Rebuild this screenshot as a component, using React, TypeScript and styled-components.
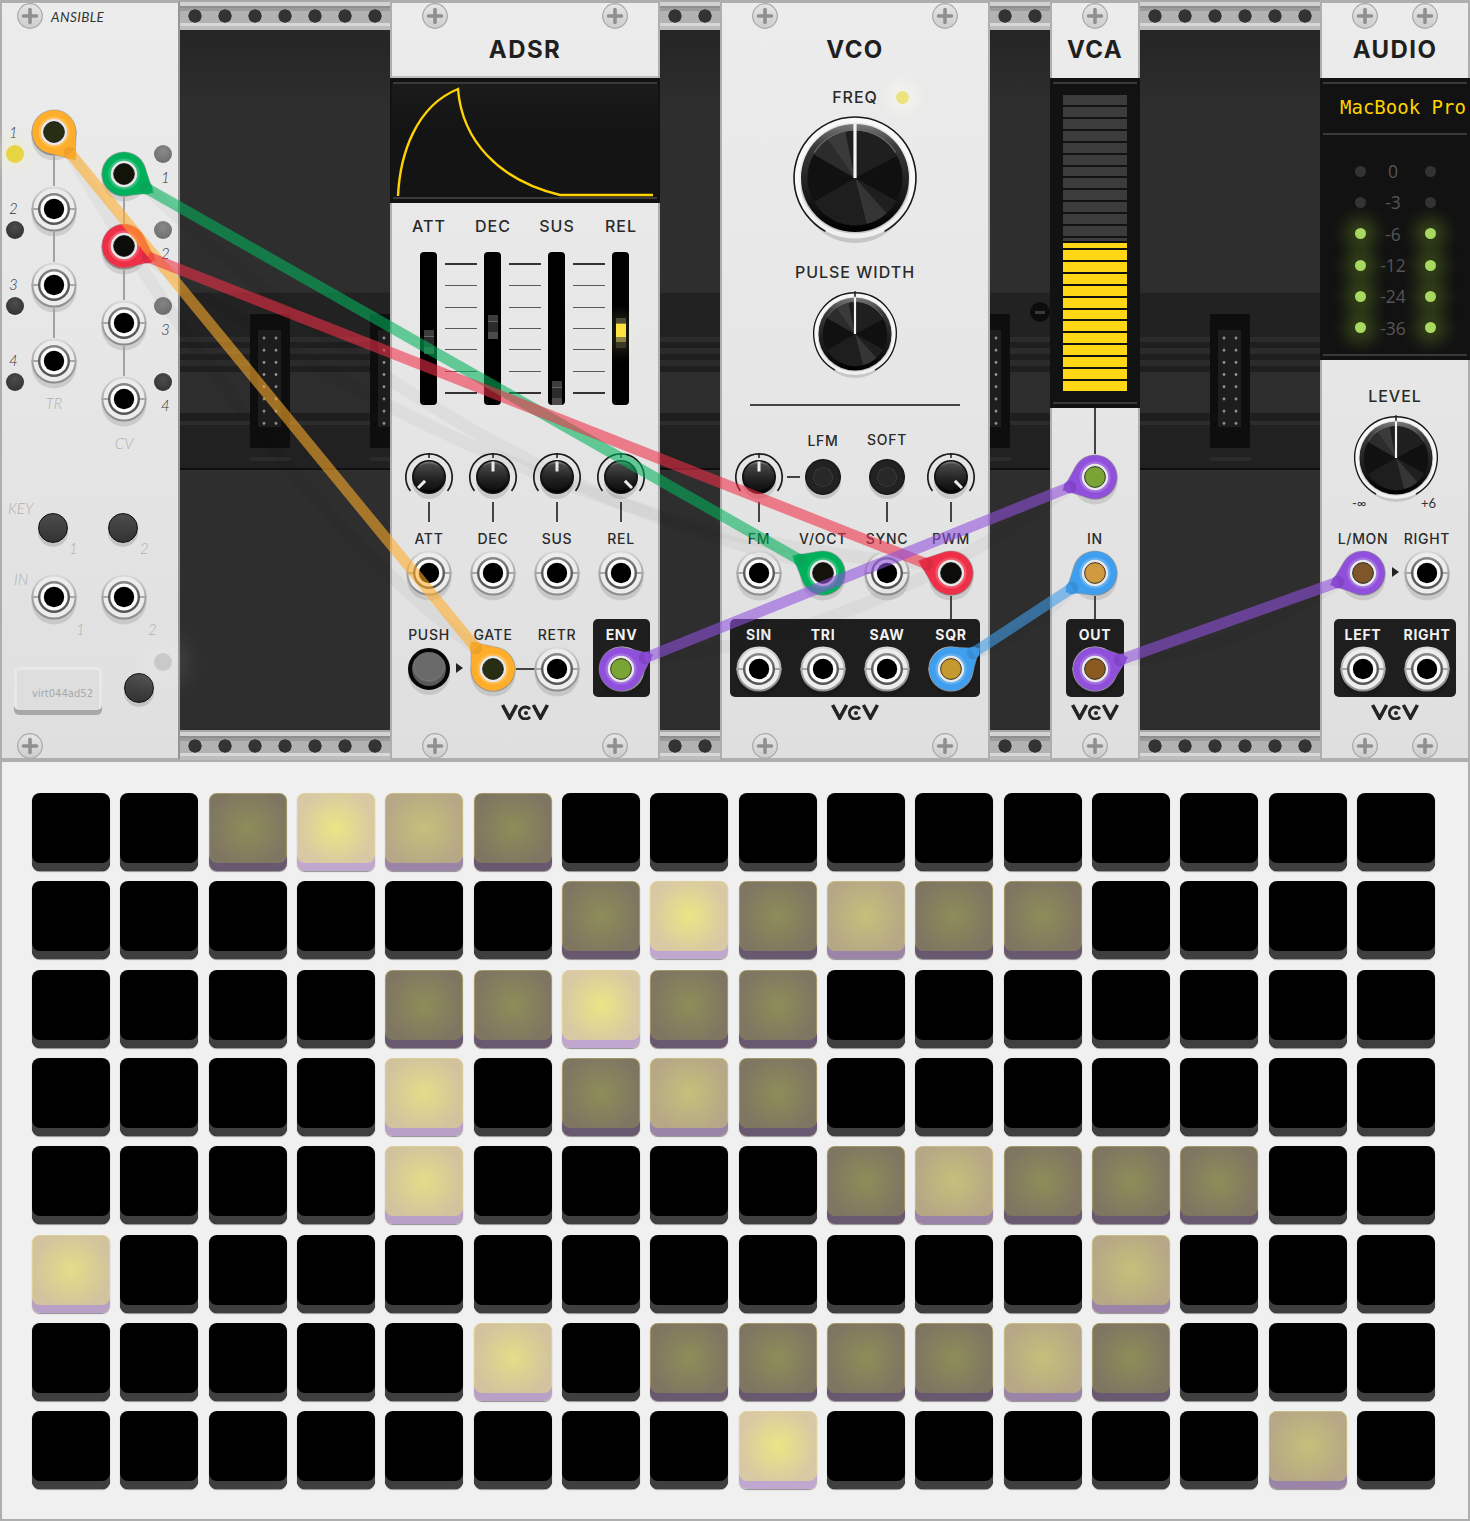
import React from 'react';
import styled, { createGlobalStyle } from 'styled-components';

const GlobalStyle = createGlobalStyle`
  html, body { margin: 0; padding: 0; background: #f0f0f0; }
  * { box-sizing: border-box; }
`;

const Page = styled.div`
  width: 1470px;
  height: 1521px;
  font-family: 'Inter', 'Liberation Sans', sans-serif;
  color: #222;
  overflow: hidden;
`;

/* ---------- rack and backplane ---------- */

const Rack = styled.div`
  display: grid;
  width: 1470px;
  height: 760px;
  & > * { grid-area: 1 / 1; }
`;

const Backplane = styled.div`
  display: flex;
  flex-direction: column;
  height: 760px;
  overflow: hidden;
  background: #2d2d2d;
`;

const Rail = styled.div`
  height: 30px;
  flex: none;
  background:
    radial-gradient(circle 6.8px at 15px 16px, #333 94%, transparent 100%) 0 0 / 30px 30px repeat-x,
    linear-gradient(#a8a8a8 0 2px, #d2d2d2 2px 6px, #8e8e8e 6px 8px, #9c9c9c 8px 11px, #b2b2b2 11px 23px, #d8d8d8 23px 26px, #bdbdbd 26px 30px);
`;

const ChassisUpper = styled.div`
  height: 262px;
  flex: none;
  background: linear-gradient(#252525, #2e2e2e 30%, #2e2e2e);
`;

const ChassisLower = styled.div`
  height: 260px;
  flex: none;
  background: #2e2e2e;
`;

const BusBand = styled.div`
  position: relative;
  display: flex;
  flex: none;
  gap: 80px;
  height: 178px;
  padding: 22px 0 0 250px;
  background: linear-gradient(
    #2a2a2a 0 1px, #222 1px 45px, #2b2b2b 45px 50px, #1f1f1f 50px 56px, #2b2b2b 56px 62px,
    #1f1f1f 62px 68px, #2b2b2b 68px 74px, #1f1f1f 74px 80px, #2d2d2d 80px 93px, #2d2d2d 93px 121px,
    #1e1e1e 121px 129px, #2c2c2c 129px 133px, #212121 133px 176px, #0f0f0f 176px 178px
  );
`;

const BusSocket = styled.div`
  flex: none;
  width: 40px;
  height: 134px;
  padding: 8px 5px 5px;
  background: #0e0e0e;
  position: relative;
  &::after {
    content: '';
    position: absolute;
    left: -1px;
    right: -1px;
    top: 143px;
    height: 4px;
    border-radius: 2px;
    background: #2b2b2b;
  }
`;

const BusPins = styled.div`
  height: 121px;
  background:
    radial-gradient(circle 1.6px at 9px 8px, #8a8a8a 90%, transparent) 0 0 / 12px 12.2px,
    #1d1d1d;
  background-repeat: repeat;
  background-position: 0 8px;
  background-size: 12px 12.2px;
  background-clip: content-box;
  padding: 8px 4px 16px 3px;
`;

const BusScrew = styled.div`
  position: absolute;
  left: 1030px;
  top: 10px;
  width: 20px;
  height: 20px;
  border-radius: 50%;
  background: #0c0c0c;
  &::after {
    content: '';
    display: block;
    width: 10px;
    height: 3px;
    margin: 8.5px 0 0 5px;
    background: #3a3a3a;
  }
`;

const ModuleRow = styled.div`
  position: relative;
  display: flex;
  width: 1470px;
  height: 760px;
`;

const Gap = styled.div<{ $w: number }>`
  flex: none;
  width: ${(p) => p.$w}px;
`;

/* ---------- panels ---------- */

const Panel = styled.div<{ $w: number }>`
  flex: none;
  display: flex;
  flex-direction: column;
  width: ${(p) => p.$w}px;
  height: 760px;
  border-style: solid;
  border-width: 3px 2px 2px;
  border-color: #aeaeae;
  background: linear-gradient(#ececec, #e6e6e6 50%, #dfdfdf);
`;

const PanelHeader = styled.div<{ $ruled?: boolean }>`
  height: 75px;
  flex: none;
  border-bottom: 2px solid ${(p) => (p.$ruled ? '#bdbdbd' : 'transparent')};
`;

const ScrewRow = styled.div<{ $single?: boolean }>`
  display: flex;
  justify-content: ${(p) => (p.$single ? 'center' : 'space-between')};
  height: 26px;
  padding: 0 ${(p) => (p.$single ? 0 : 30)}px;
`;

const Title = styled.div`
  height: 40px;
  line-height: 42px;
  text-align: center;
  font-size: 24px;
  font-weight: 700;
  letter-spacing: 1.4px;
  color: #1f1f1f;
`;

const BottomScrews = styled.div`
  margin-top: 13px;
`;

const Row4 = styled.div<{ $mt?: number; $h?: number }>`
  display: grid;
  grid-template-columns: repeat(4, 64px);
  justify-content: center;
  justify-items: center;
  align-items: center;
  flex: none;
  margin-top: ${(p) => p.$mt ?? 0}px;
  height: ${(p) => (p.$h ? `${p.$h}px` : 'auto')};
`;

const Row2 = styled(Row4)`
  grid-template-columns: repeat(2, 64px);
`;

const Label = styled.div<{ $up?: number }>`
  font-size: 14px;
  line-height: 18px;
  height: 16px;
  font-weight: 500;
  letter-spacing: 0.7px;
  color: #2a2a2a;
  white-space: nowrap;
  margin-top: ${(p) => -(p.$up ?? 0)}px;
`;

const BigLabel = styled(Label)`
  font-size: 16px;
  line-height: 16px;
  letter-spacing: 1px;
`;

const StackLabel = styled(BigLabel)<{ $mt: number }>`
  flex: none;
  text-align: center;
  margin-top: ${(p) => p.$mt}px;
`;

const OutCell = styled.div<{ $dark?: boolean }>`
  position: relative;
  display: flex;
  flex-direction: column;
  align-items: center;
  gap: 4px;
  height: 78px;
  padding-top: 7px;
  ${(p) => p.$dark && 'width: 57px; margin-left: 1px; background: #1e1e1e; border-radius: 5px;'}
  ${Label} { ${(p) => p.$dark && 'color: #f2f2f2; font-weight: 700;'} }
`;

const OutputBox = styled(Row4)<{ $w: number }>`
  width: ${(p) => p.$w}px;
  height: 78px;
  margin: 0 auto;
  border-radius: 5px;
  background: #1e1e1e;
  ${OutCell} { ${Label} { color: #f2f2f2; font-weight: 700; } }
`;

const SingleDark = styled.div`
  width: 58px;
  margin: 0 auto;
`;

const JackLink = styled.div`
  position: absolute;
  left: calc(50% + 23px);
  top: 49px;
  width: 19px;
  height: 2px;
  background: #444;
`;

const Arrow = styled.div<{ $left: number; $top: number }>`
  position: absolute;
  left: calc(50% + ${(p) => p.$left}px);
  top: ${(p) => p.$top}px;
  border-style: solid;
  border-width: 5.5px 0 5.5px 7px;
  border-color: transparent transparent transparent #222;
`;

const Tick = styled.div<{ $h?: number }>`
  width: 2px;
  height: ${(p) => p.$h ?? 20}px;
  background: #444;
`;

const KnobSlot = styled.div<{ $h: number }>`
  position: relative;
  display: flex;
  justify-content: center;
  align-items: center;
  flex: none;
  height: ${(p) => p.$h}px;
  width: 52px;
  & > svg { flex: none; display: block; overflow: visible; }
`;

const CenteredSlot = styled(KnobSlot)<{ $mt: number }>`
  width: 100%;
  margin-top: ${(p) => p.$mt}px;
`;

const KnobDash = styled.div`
  position: absolute;
  left: calc(50% + 28px);
  top: 24px;
  width: 13px;
  height: 2px;
  background: #444;
`;

const RoundButton = styled.div<{ $size: number }>`
  width: ${(p) => p.$size}px;
  height: ${(p) => p.$size}px;
  flex: none;
  border-radius: 50%;
  border: 1.5px solid #0b0b0b;
  background: linear-gradient(#4c4c4c, #333);
  box-shadow: 0 4px 0 rgba(0, 0, 0, 0.13);
`;

const SwitchButton = styled(RoundButton)`
  border-color: #111;
  background: radial-gradient(circle, #282828 0 9px, #343434 9px 10px, #222 10px 15px, #181818 18px);
`;

const PushButton = styled(RoundButton)`
  border: 4px solid #070707;
  background: radial-gradient(circle at 50% 40%, #6a6a6a 0 14px, #747474 15px, #585858 17px);
  box-shadow: 0 5px 0 rgba(0, 0, 0, 0.11);
`;

const LogoRow = styled.div`
  display: flex;
  justify-content: center;
  height: 16px;
  margin-top: 7px;
  flex: none;
`;

/* ---------- ansible ---------- */

const AnsibleTop = styled.div`
  display: flex;
  align-items: center;
  height: 26px;
  padding-left: 15px;
  gap: 8px;
`;

const AnsibleName = styled.div`
  font-family: 'Lato', sans-serif;
  font-style: italic;
  font-size: 13.5px;
  font-weight: 400;
  letter-spacing: 0.4px;
  color: #333;
  padding-top: 2px;
`;

const JackBank = styled.div`
  display: grid;
  grid-template-columns: 29px 46px 24px 46px 30px;
  height: 380px;
  margin-top: 81px;
  flex: none;
`;

const JackColumn = styled.div<{ $pt?: number }>`
  display: flex;
  flex-direction: column;
  align-items: center;
  padding-top: ${(p) => p.$pt ?? 0}px;
`;

const Wire = styled.div<{ $h: number }>`
  width: 1.5px;
  height: ${(p) => p.$h}px;
  background: #a2a2a2;
  flex: none;
`;

const TagColumn = styled.div<{ $pt: number }>`
  padding-top: ${(p) => p.$pt}px;
`;

const LeftTag = styled.div`
  display: flex;
  flex-direction: column;
  height: 76px;
  gap: 6px;
  padding-left: 4px;
`;

const RightTag = styled.div`
  display: flex;
  flex-direction: column;
  height: 76px;
  gap: 7px;
  padding-left: 7px;
`;

const ItalicNumber = styled.div<{ $pale?: boolean; $ml?: number; $mt?: number }>`
  font-family: 'Lato', sans-serif;
  font-style: italic;
  font-weight: 300;
  font-size: 15px;
  line-height: 14px;
  height: 14px;
  color: ${(p) => (p.$pale ? '#b0b0b0' : '#333')};
  margin-left: ${(p) => p.$ml ?? 0}px;
  margin-top: ${(p) => p.$mt ?? 0}px;
  white-space: nowrap;
`;

const BankCaption = styled(ItalicNumber)`
  margin-left: 0;
  text-align: center;
`;

const Led = styled.div<{ $tone: 'lit' | 'dark' | 'grey' | 'pale' }>`
  width: 18px;
  height: 18px;
  flex: none;
  border-radius: 50%;
  ${(p) =>
    ({
      lit: 'background: #e6d443; box-shadow: 0 0 14px 6px rgba(240,240,200,.45);',
      dark: 'background: radial-gradient(circle at 50% 35%, #4d4d4d, #2c2c2c);',
      grey: 'background: radial-gradient(circle at 50% 35%, #8a8a8a, #666);',
      pale: 'background: #c9c9c9; box-shadow: 0 0 26px 14px rgba(255,255,255,.12);',
    })[p.$tone]}
`;

const FreqLed = styled.div`
  width: 13px;
  height: 13px;
  margin-left: 18px;
  border-radius: 50%;
  background: #ece27e;
  box-shadow: 0 0 12px 10px rgba(255, 255, 240, 0.35);
`;

const KeyGrid = styled.div<{ $h: number }>`
  display: grid;
  grid-template-columns: 29px 46px 24px 46px;
  height: ${(p) => p.$h}px;
  flex: none;
`;

const KeyCell = styled.div<{ $mt?: number; $ml?: number }>`
  padding-top: ${(p) => p.$mt ?? 0}px;
  padding-left: ${(p) => p.$ml ?? 0}px;
`;

const PlateRow = styled.div`
  display: flex;
  height: 95px;
  flex: none;
`;

const DevicePlate = styled.div`
  width: 88px;
  height: 48px;
  margin: 29px 0 0 12px;
  padding: 21px 9px 0 0;
  border-radius: 5px;
  background: #dedede;
  box-shadow: inset 0 -5px 0 #a8a8a8, inset 0 0 0 3px #e8e8e8;
  font-family: 'DejaVu Sans', sans-serif;
  font-size: 10px;
  line-height: 12px;
  color: #a8a8a8;
  text-align: right;
  flex: none;
`;

const PlateButton = styled(RoundButton)`
  margin: 35px 0 0 22px;
`;

const PlateLed = styled(Led)`
  margin-top: 15px;
  margin-left: 0;
`;

/* ---------- displays ---------- */

const Display = styled.div<{ $h: number }>`
  height: ${(p) => p.$h}px;
  flex: none;
  margin: 0 -2px;
  padding: 4px 2px;
  background: #121212;
  overflow: hidden;
`;

const DisplayRule = styled.div`
  height: 2px;
  background: #3a3a3a;
  margin: 0 1px;
`;

const EnvelopeArea = styled.div`
  height: 113px;
  background: linear-gradient(#1b1b1b, #141414 40%);
  & > svg { display: block; }
`;

const MeterStack = styled.div`
  display: grid;
  grid-template-rows: repeat(25, 1fr);
  row-gap: 2px;
  width: 64px;
  height: 296px;
  margin: 11px auto;
`;

const MeterBar = styled.div<{ $tone: 'off' | 'on' | 'edge' }>`
  background: ${(p) =>
    p.$tone === 'off'
      ? '#3c3c3c'
      : p.$tone === 'on'
        ? '#ffd714'
        : 'linear-gradient(#3c3c3c 0 3px, #0e0e0e 3px 5px, #ffd714 5px)'};
`;

const DeviceName = styled.div`
  height: 49px;
  padding-left: 18px;
  font-family: 'DejaVu Sans Mono', monospace;
  font-size: 19px;
  line-height: 46px;
  color: #ffd200;
  white-space: pre;
  overflow: hidden;
`;

const VuGrid = styled.div`
  display: grid;
  grid-template-columns: repeat(3, 35px);
  grid-auto-rows: 31.3px;
  justify-content: center;
  align-items: center;
  justify-items: center;
  padding-top: 20.5px;
  height: 219px;
`;

const VuLed = styled.div<{ $on?: boolean }>`
  width: 11px;
  height: 11px;
  border-radius: 50%;
  background: ${(p) => (p.$on ? '#a9d960' : '#333')};
  box-shadow: ${(p) => (p.$on ? '0 0 16px 10px rgba(110,150,40,.38)' : 'none')};
`;

const VuText = styled.div`
  font-family: 'Open Sans', sans-serif;
  font-size: 17.5px;
  color: #555;
  line-height: 20px;
  white-space: nowrap;
  margin-right: 4px;
`;

const GainScale = styled.div`
  display: flex;
  justify-content: space-between;
  margin-top: -6px;
  padding: 1px 32px 0 30px;
  height: 16px;
  font-family: 'Lato', sans-serif;
  font-size: 13px;
  line-height: 16px;
  color: #333;
  flex: none;
`;

/* ---------- faders ---------- */

const FaderBank = styled.div`
  display: flex;
  height: 153px;
  margin: 14px 0 0 28px;
  flex: none;
`;

const FaderTrack = styled.div`
  position: relative;
  width: 17px;
  flex: none;
  border-radius: 4px;
  background: #000;
`;

const FaderHandle = styled.div<{ $lit?: boolean }>`
  position: absolute;
  left: 3.5px;
  width: 10px;
  height: ${(p) => (p.$lit ? 30 : 24)}px;
  background: ${(p) =>
    p.$lit
      ? 'linear-gradient(#4e4a38 0 5px, #8a8240 5px 6px, #ffe23f 6px 19px, #8a8240 19px 24px, #3a3722 24px 30px)'
      : 'linear-gradient(#3c3c3c 0 6px, #666 6px 7px, #2b2b2b 7px 17px, #4b4b4b 17px 24px)'};
  ${(p) => p.$lit && 'box-shadow: 0 0 12px 5px rgba(255,255,200,.12);'}
`;

const TickColumn = styled.div`
  display: flex;
  flex-direction: column;
  justify-content: space-between;
  width: 32px;
  margin: 0 7px 0 8px;
  padding: 11px 0;
  flex: none;
`;

const FaderTick = styled.div<{ $strong?: boolean }>`
  height: ${(p) => (p.$strong ? 2 : 1)}px;
  background: ${(p) => (p.$strong ? '#333' : '#5a5a5a')};
`;

const Rule = styled.div`
  width: 210px;
  height: 2px;
  margin: 28px auto 0;
  background: #444;
  flex: none;
`;

const FreqRow = styled.div`
  display: grid;
  grid-template-columns: 1fr auto 1fr;
  align-items: center;
  height: 16px;
  margin-top: 11px;
  flex: none;
`;

const CableLayer = styled.svg`
  position: relative;
  z-index: 2;
  display: block;
  pointer-events: none;
`;

const SharedDefsSvg = styled.svg`
  position: absolute;
  width: 0;
  height: 0;
`;

/* ---------- pad matrix ---------- */

const PadPanel = styled.div`
  display: grid;
  grid-template-columns: repeat(16, 78px);
  grid-auto-rows: 78px;
  gap: 10.33px;
  height: 761px;
  padding: 31px 0 0 30px;
  border: 2px solid #aeaeae;
  background: #f0f0f0;
`;

const padTones: Record<string, { mid: string; edge: string; lip: string }> = {
  a: { mid: '#8e8d58', edge: '#7f7662', lip: '#685870' },
  b: { mid: '#c6bf7a', edge: '#b6a886', lip: '#9a85a8' },
  c: { mid: '#e4dd88', edge: '#d2c39e', lip: '#b8a0c6' },
  d: { mid: '#ece585', edge: '#d8c8a4', lip: '#bfa7cf' },
};

const Pad = styled.div<{ $level: string }>`
  border-radius: 8px;
  ${(p) => {
    const tone = padTones[p.$level];
    return tone
      ? `background: radial-gradient(circle at 50% 45%, ${tone.mid}, ${tone.edge} 68%);
         box-shadow: inset 0 -8px 0 ${tone.lip}, 0 1px 1px rgba(0,0,0,.4), inset 0 0 0 .5px rgba(240,230,130,.6);`
      : `background: #000;
         box-shadow: inset 0 -8px 0 #3f3f3f, 0 1px 1px rgba(0,0,0,.4);`;
  }}
`;

const padRows = [
  '..adba..........',
  '......adabaa....',
  '....aadaa.......',
  '....c.aba.......',
  '....c....abaaa..',
  'c...........b...',
  '.....c.aaaaba...',
  '........d.....b.',
];

/* ---------- drawn parts ---------- */

function SharedDefs() {
  return (
    <SharedDefsSvg aria-hidden="true">
      <defs>
        <linearGradient id="jackRim" x1="0" y1="0" x2="0" y2="1">
          <stop offset="0" stopColor="#dcdcdc" />
          <stop offset="0.5" stopColor="#a6a6a6" />
          <stop offset="1" stopColor="#8a8a8a" />
        </linearGradient>
        <linearGradient id="jackCollar" x1="0" y1="0" x2="0" y2="1">
          <stop offset="0" stopColor="#8a8a8a" />
          <stop offset="0.5" stopColor="#5c5c5c" />
          <stop offset="1" stopColor="#555" />
        </linearGradient>
        <linearGradient id="screwFace" x1="0" y1="0" x2="0" y2="1">
          <stop offset="0" stopColor="#e6e6e6" />
          <stop offset="1" stopColor="#cdcdcd" />
        </linearGradient>
        <linearGradient id="knobRim" x1="0" y1="0" x2="0" y2="1">
          <stop offset="0" stopColor="#7a7a7a" />
          <stop offset="0.2" stopColor="#3a3a3a" />
          <stop offset="1" stopColor="#000" />
        </linearGradient>
        <linearGradient id="knobFace" x1="0" y1="0" x2="0" y2="1">
          <stop offset="0" stopColor="#4a4a4a" />
          <stop offset="0.6" stopColor="#222" />
          <stop offset="1" stopColor="#0e0e0e" />
        </linearGradient>
      </defs>
    </SharedDefsSvg>
  );
}

function Screw() {
  return (
    <svg width="26" height="26" viewBox="0 0 26 26">
      <circle cx="13" cy="13" r="12.3" fill="url(#screwFace)" stroke="#a9a9a9" strokeWidth="1.2" />
      <path d="M13 6.5v13M6.5 13h13" stroke="#8f8f8f" strokeWidth="3.6" strokeLinecap="round" />
    </svg>
  );
}

function Jack() {
  return (
    <svg width="46" height="46" viewBox="-23 -23 46 46" style={{ display: 'block', overflow: 'visible', flex: 'none' }}>
      <circle cy="5" r="22.5" fill="rgba(0,0,0,.11)" />
      <circle r="22.6" fill="url(#jackRim)" />
      <circle r="20.6" fill="#ececec" />
      <path d="M-22.5 0h7M15.5 0h7" stroke="#a8a8a8" strokeWidth="1.8" />
      <circle r="16" fill="url(#jackCollar)" />
      <circle r="13.6" fill="#fcfcfc" />
      <circle r="10.2" fill="#000" />
    </svg>
  );
}

function Logo() {
  return (
    <svg width="48" height="16" viewBox="0 0 48 16">
      <path d="M1.6 1 8.6 14 15.6 1M32.4 1l7 13 7-13" fill="none" stroke="#242424" strokeWidth="3.6" />
      <path d="M29 5.2A6 6 0 1 0 29 12.8" fill="none" stroke="#242424" strokeWidth="2.8" />
      <circle cx="25" cy="9" r="2" fill="#242424" />
    </svg>
  );
}

const polar = (r: number, deg: number) => {
  const a = ((deg - 90) * Math.PI) / 180;
  return [r * Math.cos(a), r * Math.sin(a)];
};

const arcPath = (r: number, from: number, to: number) => {
  const [x1, y1] = polar(r, from);
  const [x2, y2] = polar(r, to);
  const large = to - from > 180 ? 1 : 0;
  return `M${x1} ${y1}A${r} ${r} 0 ${large} 1 ${x2} ${y2}`;
};

const wedgePath = (r: number, from: number, to: number) => {
  const [x1, y1] = polar(r, from);
  const [x2, y2] = polar(r, to);
  return `M0 0L${x1} ${y1}A${r} ${r} 0 0 1 ${x2} ${y2}Z`;
};

function SmallKnob({ angle }: { angle: number }) {
  return (
    <svg width="52" height="52" viewBox="-26 -26 52 52">
      <circle cy="5" r="17" fill="#c9c9c9" />
      <path d={arcPath(23.2, -127, 127)} fill="none" stroke="#1c1c1c" strokeWidth="1.7" />
      <path d="M0-24v5" stroke="#1c1c1c" strokeWidth="1.5" />
      <circle r="17" fill="#0f0f0f" />
      <circle r="15.4" fill="url(#knobRim)" />
      <circle r="13.6" fill="url(#knobFace)" />
      <rect x="-1.5" y="-15.5" width="3" height="10" fill="#ececec" transform={`rotate(${angle})`} />
    </svg>
  );
}

const facets: [number, number, string][] = [
  [0, 62, '#1f1f1f'],
  [62, 119, '#101010'],
  [119, 138, '#1f1f1f'],
  [138, 166, '#353535'],
  [166, 240, '#1e1e1e'],
  [240, 300, '#111'],
  [300, 325, '#2c2c2c'],
  [325, 348, '#3a3a3a'],
  [348, 360, '#1e1e1e'],
];

function FacetKnob({ size, tick }: { size: number; tick?: boolean }) {
  return (
    <svg width={size} height={size} viewBox="-65 -65 130 130">
      <circle cy="11" r="54" fill="#c6c6c6" />
      <circle r="58" fill="none" stroke="#fdfdfd" strokeWidth="5" opacity="0.75" />
      <path d={arcPath(61, -151, 151)} fill="none" stroke="#181818" strokeWidth={tick ? 2 : 1.6} />
      {tick && <path d="M0-63v8" stroke="#222" strokeWidth="2.4" />}
      <circle r="54" fill="url(#knobRim)" />
      {facets.map(([from, to, fill]) => (
        <path key={from} d={wedgePath(47.5, from, to)} fill={fill} />
      ))}
      <path d={arcPath(48, -58, 58)} fill="none" stroke="#6b6b6b" strokeWidth="1.2" />
      <rect x="-1.6" y="-54" width="3.2" height="54" fill="#f4f4f4" />
    </svg>
  );
}

function EnvelopeGraph() {
  return (
    <svg width="266" height="113" viewBox="0 0 266 113">
      <path
        d="M6 112C8 70 24 22 66 5 70 56 106 96 168 111L261 111"
        fill="none"
        stroke="#ffd200"
        strokeWidth="2.4"
        strokeLinejoin="miter"
      />
    </svg>
  );
}

/* ---------- cables ---------- */

type PlugEnd = { x: number; y: number; dx: number; dy: number; hole: string };
type Cable = { color: string; dot: string; a: PlugEnd; b: PlugEnd };

const cables: Cable[] = [
  {
    color: '#ffae2b',
    dot: '#eda12a',
    a: { x: 54, y: 132, dx: 70, dy: 153, hole: '#272e14' },
    b: { x: 493, y: 669, dx: 476, dy: 648, hole: '#272e14' },
  },
  {
    color: '#00b15c',
    dot: '#0ba55a',
    a: { x: 124, y: 174, dx: 146, dy: 188, hole: '#13130a' },
    b: { x: 823, y: 573, dx: 800, dy: 560, hole: '#13130a' },
  },
  {
    color: '#ef2f47',
    dot: '#d92c42',
    a: { x: 124, y: 246, dx: 148, dy: 257, hole: '#0c0c08' },
    b: { x: 951, y: 573, dx: 927, dy: 564, hole: '#0c0c08' },
  },
  {
    color: '#9150dc',
    dot: '#8243c9',
    a: { x: 621, y: 669, dx: 645, dy: 658, hole: '#7aa535' },
    b: { x: 1095, y: 477, dx: 1070, dy: 487, hole: '#7aa535' },
  },
  {
    color: '#3f9fee',
    dot: '#3a90d8',
    a: { x: 951, y: 669, dx: 973, dy: 653, hole: '#c49a30' },
    b: { x: 1095, y: 573, dx: 1072, dy: 588, hole: '#d09a40' },
  },
  {
    color: '#9150dc',
    dot: '#8243c9',
    a: { x: 1095, y: 669, dx: 1120, dy: 660, hole: '#8a5a20' },
    b: { x: 1363, y: 573, dx: 1338, dy: 582, hole: '#7e5629' },
  },
];

function Plug({ end, color, dot }: { end: PlugEnd; color: string; dot: string }) {
  const angle = (Math.atan2(end.dy - end.y, end.dx - end.x) * 180) / Math.PI;
  const R = 22;
  const tip = 35;
  const t = Math.acos(R / tip);
  const tx = R * Math.cos(t);
  const ty = R * Math.sin(t);
  const dist = Math.hypot(end.dx - end.x, end.dy - end.y);
  return (
    <g transform={`translate(${end.x} ${end.y})`}>
      <g transform={`rotate(${angle})`}>
        <path
          d={`M${tx} ${-ty}A${R} ${R} 0 1 0 ${tx} ${ty}L${tip} 0Z`}
          fill={color}
          stroke="#8b8b8b"
          strokeOpacity="0.45"
          strokeWidth="1"
          strokeLinejoin="round"
        />
        <circle cx={dist} r="6.3" fill={dot} />
      </g>
      <circle r="15.6" fill="#fff" fillOpacity="0.18" />
      <circle r="13.2" fill="#e8e8e8" />
      <circle r="10.4" fill={end.hole} stroke="#111" strokeWidth="0.8" />
    </g>
  );
}

function Cables() {
  return (
    <CableLayer width="1470" height="760" viewBox="0 0 1470 760">
      {cables.map((c) => {
        const len = Math.hypot(c.b.dx - c.a.dx, c.b.dy - c.a.dy);
        const mx = (c.a.dx + c.b.dx) / 2;
        const my = (c.a.dy + c.b.dy) / 2 + len * 0.15;
        return (
          <path
            key={`s${c.a.x}${c.a.y}`}
            d={`M${c.a.dx} ${c.a.dy}Q${mx} ${my} ${c.b.dx} ${c.b.dy}`}
            fill="none"
            stroke="rgba(0,0,0,.032)"
            strokeWidth="13"
          />
        );
      })}
      {cables.map((c) => (
        <g key={`p${c.a.x}${c.a.y}`}>
          <Plug end={c.a} color={c.color} dot={c.dot} />
          <Plug end={c.b} color={c.color} dot={c.dot} />
        </g>
      ))}
      {cables.map((c) => (
        <line
          key={`c${c.a.x}${c.a.y}`}
          x1={c.a.dx}
          y1={c.a.dy}
          x2={c.b.dx}
          y2={c.b.dy}
          stroke={c.color}
          strokeOpacity="0.58"
          strokeWidth="11"
        />
      ))}
    </CableLayer>
  );
}

/* ---------- modules ---------- */

function Ansible() {
  return (
    <Panel $w={180} style={{ borderRightColor: '#959595' }}>
      <AnsibleTop>
        <Screw />
        <AnsibleName>ANSIBLE</AnsibleName>
      </AnsibleTop>
      <JackBank>
        <TagColumn $pt={15}>
          {['1', '2', '3', '4'].map((n, i) => (
            <LeftTag key={n}>
              <ItalicNumber $ml={3}>{n}</ItalicNumber>
              <Led $tone={i === 0 ? 'lit' : 'dark'} />
            </LeftTag>
          ))}
        </TagColumn>
        <JackColumn>
          <Jack />
          <Wire $h={30} />
          <Jack />
          <Wire $h={30} />
          <Jack />
          <Wire $h={30} />
          <Jack />
          <BankCaption $pale $mt={12}>TR</BankCaption>
        </JackColumn>
        <div />
        <JackColumn $pt={41}>
          <Jack />
          <Wire $h={27} />
          <Jack />
          <Wire $h={30} />
          <Jack />
          <Wire $h={30} />
          <Jack />
          <BankCaption $pale $mt={14}>CV</BankCaption>
        </JackColumn>
        <TagColumn $pt={35}>
          {['1', '2', '3', '4'].map((n, i) => (
            <RightTag key={n}>
              <Led $tone={i === 3 ? 'dark' : 'grey'} />
              <ItalicNumber $ml={7}>{n}</ItalicNumber>
            </RightTag>
          ))}
        </TagColumn>
      </JackBank>
      <KeyGrid $h={70}>
        <KeyCell $mt={11} $ml={6}><ItalicNumber $pale>KEY</ItalicNumber></KeyCell>
        <KeyCell $mt={23} $ml={7}>
          <RoundButton $size={30} />
          <ItalicNumber $pale $ml={31} $mt={-2}>1</ItalicNumber>
        </KeyCell>
        <div />
        <KeyCell $mt={23} $ml={7}>
          <RoundButton $size={30} />
          <ItalicNumber $pale $ml={32} $mt={-2}>2</ItalicNumber>
        </KeyCell>
      </KeyGrid>
      <KeyGrid $h={78}>
        <KeyCell $mt={12} $ml={12}><ItalicNumber $pale>IN</ItalicNumber></KeyCell>
        <KeyCell $mt={14}>
          <Jack />
          <ItalicNumber $pale $ml={45} $mt={2}>1</ItalicNumber>
        </KeyCell>
        <div />
        <KeyCell $mt={14}>
          <Jack />
          <ItalicNumber $pale $ml={47} $mt={2}>2</ItalicNumber>
        </KeyCell>
      </KeyGrid>
      <PlateRow>
        <DevicePlate>virt044ad52</DevicePlate>
        <PlateButton $size={30} />
        <PlateLed $tone="pale" />
      </PlateRow>
      <AnsibleTop>
        <Screw />
      </AnsibleTop>
    </Panel>
  );
}

const sliderHandles = [{ top: 78 }, { top: 63 }, { top: 129 }, { top: 66, lit: true }];
const adsrNames = ['ATT', 'DEC', 'SUS', 'REL'];

function Adsr() {
  return (
    <Panel $w={270}>
      <PanelHeader $ruled>
        <ScrewRow><Screw /><Screw /></ScrewRow>
        <Title>ADSR</Title>
      </PanelHeader>
      <Display $h={125}>
        <DisplayRule />
        <EnvelopeArea><EnvelopeGraph /></EnvelopeArea>
        <DisplayRule />
      </Display>
      <Row4 $mt={11} $h={24}>
        {adsrNames.map((n) => <BigLabel key={n}>{n}</BigLabel>)}
      </Row4>
      <FaderBank>
        {sliderHandles.map((h, i) => (
          <React.Fragment key={adsrNames[i]}>
            <FaderTrack>
              <FaderHandle $lit={h.lit} style={{ top: h.top }} />
            </FaderTrack>
            {i < 3 && (
              <TickColumn>
                {[0, 1, 2, 3, 4, 5, 6].map((t) => <FaderTick key={t} $strong={t === 0 || t === 6} />)}
              </TickColumn>
            )}
          </React.Fragment>
        ))}
      </FaderBank>
      <Row4 $mt={47} $h={50}>
        {[-135, 0, 0, 135].map((a, i) => (
          <KnobSlot key={adsrNames[i]} $h={50}><SmallKnob angle={a} /></KnobSlot>
        ))}
      </Row4>
      <Row4 $h={20}>
        {adsrNames.map((n) => <Tick key={n} />)}
      </Row4>
      <Row4 $mt={8} $h={16}>
        {adsrNames.map((n) => <Label key={n}>{n}</Label>)}
      </Row4>
      <Row4 $mt={4} $h={46}>
        {adsrNames.map((n) => <Jack key={n} />)}
      </Row4>
      <Row4 $mt={23} $h={78}>
        <OutCell>
          <Label>PUSH</Label>
          <PushButton $size={42} style={{ marginTop: 2 }} />
        </OutCell>
        <OutCell>
          <Label>GATE</Label>
          <Jack />
          <Arrow $left={-37} $top={44} />
          <JackLink />
        </OutCell>
        <OutCell>
          <Label>RETR</Label>
          <Jack />
        </OutCell>
        <OutCell $dark>
          <Label>ENV</Label>
          <Jack />
        </OutCell>
      </Row4>
      <LogoRow><Logo /></LogoRow>
      <BottomScrews><ScrewRow><Screw /><Screw /></ScrewRow></BottomScrews>
    </Panel>
  );
}

function Vco() {
  return (
    <Panel $w={270}>
      <PanelHeader>
        <ScrewRow><Screw /><Screw /></ScrewRow>
        <Title>VCO</Title>
      </PanelHeader>
      <FreqRow>
        <div />
        <BigLabel>FREQ</BigLabel>
        <FreqLed />
      </FreqRow>
      <CenteredSlot $h={122} $mt={12}><FacetKnob size={130} /></CenteredSlot>
      <StackLabel $mt={25}>PULSE WIDTH</StackLabel>
      <CenteredSlot $h={84} $mt={12}><FacetKnob size={88} tick /></CenteredSlot>
      <Rule />
      <Row4 $mt={26} $h={16}>
        <div />
        <Label>LFM</Label>
        <Label $up={3}>SOFT</Label>
        <div />
      </Row4>
      <Row4 $mt={4} $h={50}>
        <KnobSlot $h={50}>
          <SmallKnob angle={0} />
          <KnobDash />
        </KnobSlot>
        <KnobSlot $h={50}><SwitchButton $size={36} /></KnobSlot>
        <KnobSlot $h={50}><SwitchButton $size={36} /></KnobSlot>
        <KnobSlot $h={50}><SmallKnob angle={135} /></KnobSlot>
      </Row4>
      <Row4 $h={20}>
        <Tick />
        <div />
        <Tick />
        <Tick />
      </Row4>
      <Row4 $mt={8} $h={16}>
        {['FM', 'V/OCT', 'SYNC', 'PWM'].map((n) => <Label key={n}>{n}</Label>)}
      </Row4>
      <Row4 $mt={4} $h={46}>
        {[0, 1, 2, 3].map((n) => <Jack key={n} />)}
      </Row4>
      <Row4 $h={23}>
        <div />
        <div />
        <div />
        <Tick $h={23} />
      </Row4>
      <OutputBox $w={250}>
        {['SIN', 'TRI', 'SAW', 'SQR'].map((n) => (
          <OutCell key={n}>
            <Label>{n}</Label>
            <Jack />
          </OutCell>
        ))}
      </OutputBox>
      <LogoRow><Logo /></LogoRow>
      <BottomScrews><ScrewRow><Screw /><Screw /></ScrewRow></BottomScrews>
    </Panel>
  );
}

function Vca() {
  return (
    <Panel $w={90}>
      <PanelHeader>
        <ScrewRow $single><Screw /></ScrewRow>
        <Title>VCA</Title>
      </PanelHeader>
      <Display $h={330}>
        <DisplayRule />
        <MeterStack>
          {Array.from({ length: 25 }, (_, i) => (
            <MeterBar key={i} $tone={i < 12 ? 'off' : i === 12 ? 'edge' : 'on'} />
          ))}
        </MeterStack>
        <DisplayRule style={{ marginTop: 6 }} />
      </Display>
      <JackColumn>
        <Tick $h={46} />
        <Jack />
        <StackLabel $mt={30}>
          <Label>IN</Label>
        </StackLabel>
        <div style={{ height: 4 }} />
        <Jack />
        <Tick $h={23} />
      </JackColumn>
      <SingleDark>
        <OutCell $dark style={{ marginLeft: 0, width: 58 }}>
          <Label>OUT</Label>
          <Jack />
        </OutCell>
      </SingleDark>
      <LogoRow><Logo /></LogoRow>
      <BottomScrews><ScrewRow $single><Screw /></ScrewRow></BottomScrews>
    </Panel>
  );
}

const vuLevels = ['0', '-3', '-6', '-12', '-24', '-36'];

function Audio() {
  return (
    <Panel $w={150}>
      <PanelHeader>
        <ScrewRow><Screw /><Screw /></ScrewRow>
        <Title>AUDIO</Title>
      </PanelHeader>
      <Display $h={282}>
        <DisplayRule />
        <DeviceName>MacBook Pro</DeviceName>
        <DisplayRule />
        <VuGrid>
          {vuLevels.map((v, i) => (
            <React.Fragment key={v}>
              <VuLed $on={i > 1} />
              <VuText>{v}</VuText>
              <VuLed $on={i > 1} />
            </React.Fragment>
          ))}
        </VuGrid>
        <DisplayRule />
      </Display>
      <StackLabel $mt={28}>LEVEL</StackLabel>
      <CenteredSlot $h={84} $mt={12} style={{ paddingLeft: 2 }}><FacetKnob size={88} tick /></CenteredSlot>
      <GainScale>
        <span>-∞</span>
        <span>+6</span>
      </GainScale>
      <Row2 $mt={20} $h={16}>
        <Label>L/MON</Label>
        <Label>RIGHT</Label>
      </Row2>
      <Row2 $mt={4} $h={46}>
        <OutCell style={{ padding: 0, height: 46 }}>
          <Jack />
          <Arrow $left={29} $top={17} />
        </OutCell>
        <Jack />
      </Row2>
      <OutputBox $w={122} style={{ marginTop: 23, gridTemplateColumns: 'repeat(2, 64px)' }}>
        {['LEFT', 'RIGHT'].map((n) => (
          <OutCell key={n}>
            <Label>{n}</Label>
            <Jack />
          </OutCell>
        ))}
      </OutputBox>
      <LogoRow><Logo /></LogoRow>
      <BottomScrews><ScrewRow><Screw /><Screw /></ScrewRow></BottomScrews>
    </Panel>
  );
}

export default function App() {
  return (
    <Page>
      <GlobalStyle />
      <SharedDefs />
      <Rack>
        <Backplane>
          <Rail />
          <ChassisUpper />
          <BusBand>
            {Array.from({ length: 11 }, (_, i) => (
              <BusSocket key={i}><BusPins /></BusSocket>
            ))}
            <BusScrew />
          </BusBand>
          <ChassisLower />
          <Rail />
        </Backplane>
        <ModuleRow>
          <Ansible />
          <Gap $w={210} />
          <Adsr />
          <Gap $w={60} />
          <Vco />
          <Gap $w={60} />
          <Vca />
          <Gap $w={180} />
          <Audio />
        </ModuleRow>
        <Cables />
      </Rack>
      <PadPanel>
        {padRows.flatMap((row, r) =>
          row.split('').map((level, c) => <Pad key={`${r}-${c}`} $level={level} />),
        )}
      </PadPanel>
    </Page>
  );
}
